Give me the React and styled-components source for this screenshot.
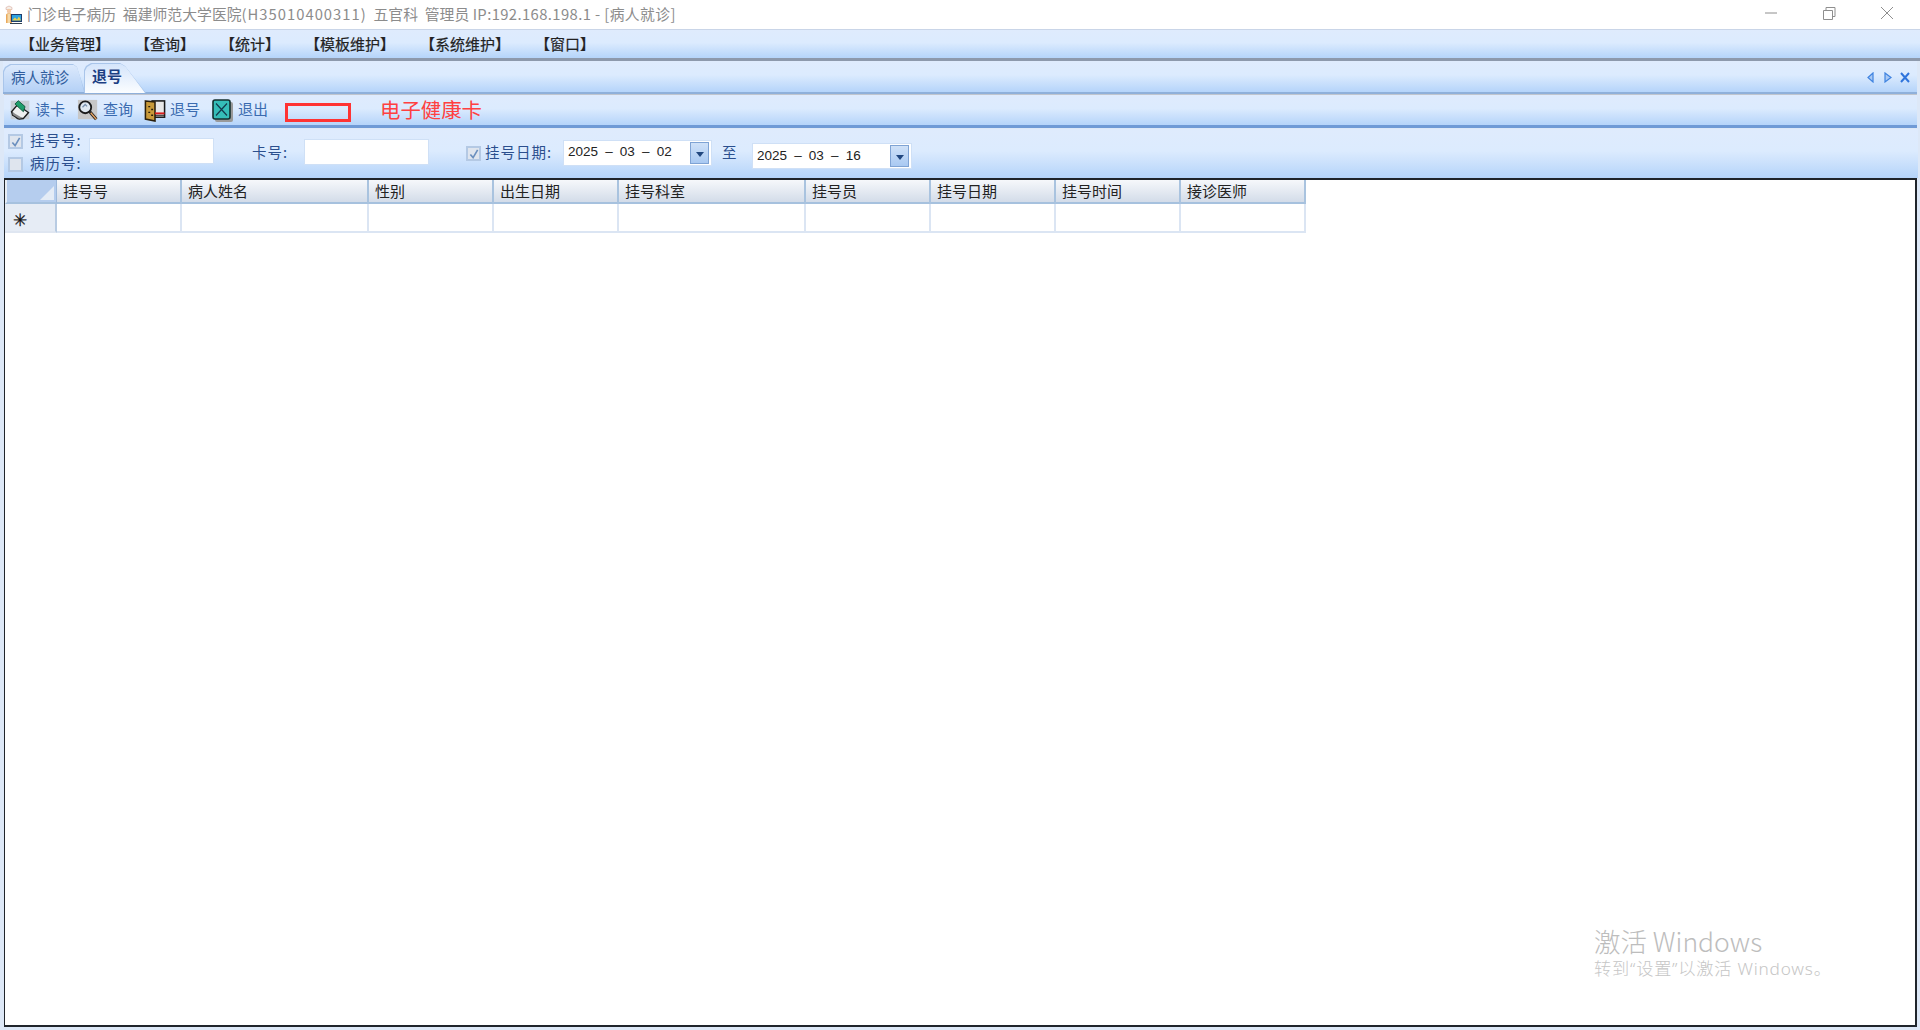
import React from "react";
import styled, { createGlobalStyle } from "styled-components";

const Global = createGlobalStyle`
  html, body { margin: 0; padding: 0; width: 100%; height: 100%; overflow: hidden; background: #fff; }
  #root { width: 1920px; height: 1030px; }
  * { box-sizing: border-box; }
`;

const FONT = `"Noto Sans CJK SC", "Noto Sans", sans-serif`;
const BAND = "linear-gradient(#dfebfd 0%, #dcebfe 45%, #b5d4fa 100%)";

const Win = styled.div`
  width: 1920px; height: 1030px; display: flex; flex-direction: column;
  font-family: ${FONT}; background: #dde8f7; position: relative; overflow: hidden;
`;
const TitleBar = styled.div`
  height: 29px; flex: none; background: #fff; display: flex; align-items: center; padding-left: 3px;
  color: #8c8c8c; font-size: 14.8px; white-space: pre;
`;
const TitleText = styled.span`margin: -2px 0 0 4px; flex: 1; letter-spacing: 0.05px; line-height: 29px;`;
const Wide = styled.span`letter-spacing: ${p => p.$ls}px;`;
const WinBtns = styled.div`display: flex; width: 182px; flex: none; justify-content: space-between; padding: 0 25px; color: #8e8e8e; margin-top: -3px;`;
const MenuBar = styled.div`
  height: 32px; flex: none; display: flex; gap: 25px; padding: 0 0 0 20px; align-items: center;
  background: ${BAND}; border-top: 1px solid #c9d5e8; border-bottom: 3px solid #8d99ac;
`;
const MenuItem = styled.span`font-size: 15px; color: #222; line-height: 20px; -webkit-text-stroke: 0.2px #222;`;

const TabStrip = styled.div`
  height: 33px; flex: none; margin: 0 3px; display: flex; align-items: flex-end; position: relative;
  background: ${BAND}; border-bottom: 2px solid #8fb0da;
`;
const Tab = styled.div`
  position: relative;
  height: ${p => p.$active ? 30 : 28}px;
  width: ${p => p.$active ? 62 : 82}px;
  margin-bottom: ${p => p.$active ? -1 : 0}px;
  margin-left: ${p => p.$active ? -1 : 0}px;
  padding: 2px 0 0 8px;
  font-size: ${p => p.$active ? 15 : 14.5}px;
  font-weight: ${p => p.$active ? 700 : 400};
  color: ${p => p.$active ? "#1c3f83" : "#2f5c9c"};
  line-height: 22px;
  background: #a9c5ea;
  --shape: ${p => p.$active
    ? "polygon(0 100%, 0 7px, 2px 3px, 7px 0, 36px 0, 41px 3px, 100% 100%)"
    : "polygon(0 100%, 0 7px, 2px 3px, 7px 0, 70px 0, 74px 3px, 100% 100%)"};
  clip-path: var(--shape);
  & > span { position: relative; }
  &::before {
    content: ""; position: absolute; inset: 1px 1px 0 1px; clip-path: var(--shape);
    background: ${p => p.$active ? "linear-gradient(#d5e5fb, #fbfdff)" : "linear-gradient(#dce9fc, #b4d1f6)"};
  }
`;
const TabCtrls = styled.div`position: absolute; right: 7px; top: 11px; display: flex; gap: 7px;`;

const ToolBar = styled.div`
  height: 34px; flex: none; margin: 0 3px 0 4px; display: flex; align-items: center; padding-left: 5px;
  background: ${BAND}; border-top: 1px solid #c0c5ce; border-bottom: 3px solid #6f9ad6; position: relative;
`;
const Tool = styled.div`display: flex; align-items: center; width: ${p => p.$w}px; color: #3a6bb0; font-size: 15px; line-height: 20px;`;
const ToolLabel = styled.span`margin-top: -2px;`;
const IconSlot = styled.span`width: 26px; flex: none; display: flex; align-items: center;`;
const RedBox = styled.div`width: 66px; height: 19px; margin: 4px 0 0 5px; border: 3px solid #ff3333; flex: none;`;
const RedText = styled.div`font-size: 20.4px; color: #ff4040; margin-left: 29px; line-height: 26px; margin-top: -3px;`;

const Filter = styled.div`
  height: 49px; flex: none; margin: 1px 2px 0 4px; display: flex; align-items: flex-start;
  background: ${BAND}; position: relative; padding-left: 4px;
`;
const CheckCol = styled.div`display: flex; flex-direction: column; gap: 8px; margin-top: 5px;`;
const CheckRow = styled.label`
  display: flex; align-items: center; gap: ${p => p.$gap ?? 7}px; height: 15px;
  margin-top: ${p => p.$top ?? 0}px; margin-left: ${p => p.$left ?? 0}px;
`;
const CheckText = styled.span`
  width: ${p => p.$w}px; font-size: 14.5px; letter-spacing: 1px; color: #2b4f8e; line-height: 16px; margin-top: -3px; white-space: pre;
`;
const Box = styled.span`
  width: 15px; height: 15px; flex: none; border: 2px solid #b4c9e4; background: #dfe5ee;
  display: inline-flex; align-items: center; justify-content: center;
`;
const Field = styled.div`
  width: ${p => p.$w}px; height: 26px; margin-left: ${p => p.$left}px; margin-top: ${p => p.$top}px;
  background: #fff; border: 1px solid #cfe0f6; flex: none; display: flex; align-items: center; justify-content: space-between;
  padding: 0 2px 0 4px; font-family: "Liberation Sans", sans-serif; font-size: 13.5px; color: #222; word-spacing: 3.4px;
`;
const DateText = styled.span`margin-top: ${p => p.$up ? -3 : -1}px;`;
const Label = styled.span`
  width: ${p => p.$w}px; flex: none; font-size: 14.5px; letter-spacing: 1px; color: #2b4f8e;
  margin-left: ${p => p.$left}px; margin-top: ${p => p.$top}px; line-height: 20px; white-space: pre;
`;
const Arrow = styled.span`
  width: 19px; height: 22px; flex: none; background: linear-gradient(#cfe1f8, #a9c9f2); border: 1px solid #7fa3d4;
  display: inline-flex; align-items: center; justify-content: center; padding-top: 3px;
`;

const GridArea = styled.div`
  flex: 1; margin: 0 3px 3px 4px; background: #fff; border: 2px solid #20252b; border-left-width: 1px; position: relative; overflow: hidden;
`;
const Table = styled.div`
  width: 1301px; display: grid;
  grid-template-columns: 52px 125px 187px 125px 125px 187px 125px 125px 125px 125px;
  grid-template-rows: 24px 29px;
`;
const Corner = styled.div`
  background: #b5cdee; border-left: 2px solid #e8eef6; border-right: 1px solid #9db9db; border-bottom: 2px solid #a6c1de; position: relative;
  &::after { content: ""; position: absolute; right: 2px; bottom: 2px; border-left: 14px solid transparent; border-bottom: 14px solid #e4ecf6; }
`;
const Head = styled.div`
  background: linear-gradient(#f6f8fb, #d3dce9); border-right: 2px solid #a9c3df; border-bottom: 2px solid #a6c1de;
  font-size: 15px; color: #222; padding-left: 6px; line-height: 22px;
`;
const RowHead = styled.div`
  background: #e6ecf5; border-right: 2px solid #b8cbe2; border-bottom: 2px solid #dfe6f1;
  font-size: 17px; color: #111; padding: 3px 0 0 8px; line-height: 24px; -webkit-text-stroke: 0.3px #111;
`;
const Cell = styled.div`background: #fff; border-right: 2px solid #dbe5f3; border-bottom: 2px solid #dbe5f3;`;

const Watermark = styled.div`position: absolute; left: 1594px; top: 923px; color: #bdbdbd; pointer-events: none;`;
const WmTop = styled.div`font-size: 26.5px; line-height: 36px; font-weight: 300;`;
const WmSub = styled.div`
  font-family: "Noto Sans", "Noto Sans CJK SC", sans-serif; font-size: 17.2px; letter-spacing: 0.8px; line-height: 24px; color: #c6c6c6; margin-top: -2px; font-weight: 300;
`;

const Logo = () => (
  <svg width="20" height="20" viewBox="0 0 20 20">
    <path d="M3 2.500l3-1.500 3 1.500v2H3z" fill="#f4f0ea" stroke="#d9a79a" strokeWidth="0.6" />
    <circle cx="6" cy="6" r="2.200" fill="#f3c9a6" />
    <path d="M3 10c0-1 1-2 3-2s3 1 3 2v8H3z" fill="#e9a95c" />
    <path d="M4.500 8.500h2.500v9.500H4.500z" fill="#f5d9a8" />
    <rect x="8" y="9" width="11" height="8" fill="#1c3d6e" />
    <rect x="9" y="10" width="9" height="5.500" fill="#2fa3e0" />
    <path d="M9 15.500l3-3 2 2 2-3 2 4z" fill="#e8d14d" />
    <path d="M7 18h12v1H7z" fill="#33424f" />
  </svg>
);
const ReaderIcon = () => (
  <svg width="22" height="24" viewBox="0 0 26 24">
    <rect x="2" y="1" width="22" height="22" fill="#c7cdd4" />
    <path d="M3 14l7-8 13 9-6 7H10z" fill="#efefef" stroke="#1c1c1c" strokeWidth="1.6" />
    <path d="M3 14l1 4 8 5 5-1" fill="#8b8b8b" stroke="#1c1c1c" strokeWidth="1.2" />
    <path d="M7 5l4-4 8 7-2 6z" fill="#1f9e6b" stroke="#0e4f35" strokeWidth="1" />
  </svg>
);
const GlassIcon = () => (
  <svg width="22" height="22" viewBox="0 0 24 24">
    <rect x="1" y="1" width="21" height="21" fill="#c7c7c7" />
    <circle cx="9" cy="9" r="6.500" fill="#dfe8f0" stroke="#1a1a1a" strokeWidth="2" />
    <path d="M6 9l3-3 2 2" stroke="#7a92ae" strokeWidth="1.4" fill="none" />
    <path d="M14 14l7 8" stroke="#1a1a1a" strokeWidth="3.4" />
    <path d="M15 15l6 7" stroke="#e0a060" strokeWidth="1.6" />
  </svg>
);
const DoorIcon = () => (
  <svg width="22" height="23" viewBox="0 0 22 24">
    <rect x="8" y="2" width="13" height="17" fill="#e8e8e8" stroke="#1a1a1a" strokeWidth="1.6" />
    <path d="M1 2l10 1v20l-10-2z" fill="#c99a3a" stroke="#2a1f0c" strokeWidth="1.6" />
    <path d="M4 8h2M7 11h2M4 14h2M7 17h2" stroke="#2a1f0c" strokeWidth="1.4" />
    <path d="M11 15h10" stroke="#d91c1c" strokeWidth="2" />
    <path d="M11 17h10" stroke="#1a1a1a" strokeWidth="1" />
  </svg>
);
const ExitIcon = () => (
  <svg width="21" height="23" viewBox="0 0 21 23">
    <rect x="3" y="3" width="18" height="20" rx="2" fill="#9a9a9a" />
    <rect x="1" y="1" width="17" height="19" rx="2" fill="#35bdb8" stroke="#14302f" strokeWidth="1.6" />
    <path d="M4 4.500l11 12M15 4.500l-11 12" stroke="#133a4c" strokeWidth="1.2" />
  </svg>
);
const Tick = () => (
  <svg width="10" height="10" viewBox="0 0 11 11"><path d="M1.500 6l3 3.500 5-8.500" fill="none" stroke="#6b8fbe" strokeWidth="1.8" /></svg>
);
const Down = () => <svg width="8" height="5" viewBox="0 0 8 5"><path d="M0 0h8L4 5z" fill="#21477f" /></svg>;
const ChromeIcon = ({ d }) => (
  <svg width="16" height="16" viewBox="0 0 16 16"><path d={d} fill="none" stroke="currentColor" strokeWidth="1" /></svg>
);

const heads = ["挂号号", "病人姓名", "性别", "出生日期", "挂号科室", "挂号员", "挂号日期", "挂号时间", "接诊医师"];

export default function App() {
  return (
    <Win>
      <Global />
      <TitleBar>
        <Logo />
        <TitleText>
          {"门诊电子病历  福建师范大学医院"}<Wide $ls={1}>(H35010400311)</Wide>{"  五官科  管理员 "}<Wide $ls={0.4}>{"IP:192.168.198.1 - [病人就诊]"}</Wide>
        </TitleText>
        <WinBtns>
          <ChromeIcon d="M2 8h12" />
          <ChromeIcon d="M2.500 5.500h9v9h-9zM5 5.500V2.500h9v9h-2.500" />
          <ChromeIcon d="M2 2l12 12M14 2L2 14" />
        </WinBtns>
      </TitleBar>
      <MenuBar>
        {["【业务管理】", "【查询】", "【统计】", "【模板维护】", "【系统维护】", "【窗口】"].map(m => <MenuItem key={m}>{m}</MenuItem>)}
      </MenuBar>
      <TabStrip>
        <Tab><span>病人就诊</span></Tab>
        <Tab $active><span>退号</span></Tab>
        <TabCtrls>
          <svg width="10" height="11" viewBox="0 0 10 11"><path d="M7 1L2 5.500 7 10z" fill="#a9c9f4" stroke="#3f83e0" strokeWidth="1.2" /></svg>
          <svg width="10" height="11" viewBox="0 0 10 11"><path d="M2 1l6 4.500L2 10z" fill="#a9c9f4" stroke="#3f83e0" strokeWidth="1.2" /></svg>
          <svg width="10" height="11" viewBox="0 0 10 11"><path d="M1 1l8 9M9 1L1 10" stroke="#2f74dc" strokeWidth="2" /></svg>
        </TabCtrls>
      </TabStrip>
      <ToolBar>
        <Tool $w={68}><IconSlot><ReaderIcon /></IconSlot><ToolLabel>读卡</ToolLabel></Tool>
        <Tool $w={67}><IconSlot><GlassIcon /></IconSlot><ToolLabel>查询</ToolLabel></Tool>
        <Tool $w={68}><IconSlot><DoorIcon /></IconSlot><ToolLabel>退号</ToolLabel></Tool>
        <Tool $w={68}><IconSlot><ExitIcon /></IconSlot><ToolLabel>退出</ToolLabel></Tool>
        <RedBox />
        <RedText>电子健康卡</RedText>
      </ToolBar>
      <Filter>
        <CheckCol>
          <CheckRow><Box><Tick /></Box><CheckText $w={52}>挂号号:</CheckText></CheckRow>
          <CheckRow><Box /><CheckText $w={52}>病历号:</CheckText></CheckRow>
        </CheckCol>
        <Field $w={125} $left={7} $top={9} />
        <Label $w={36} $left={38} $top={13}>卡号:</Label>
        <Field $w={125} $left={16} $top={10} />
        <CheckRow $left={37} $top={17} $gap={4}><Box><Tick /></Box><CheckText $w={67}>挂号日期:</CheckText></CheckRow>
        <Field $w={149} $left={11} $top={11}>
          <DateText $up>2025 – 03 – 02</DateText><Arrow><Down /></Arrow>
        </Field>
        <Label $w={15} $left={10} $top={13}>至</Label>
        <Field $w={160} $left={15} $top={14}>
          <DateText>2025 – 03 – 16</DateText><Arrow><Down /></Arrow>
        </Field>
      </Filter>
      <GridArea>
        <Table>
          <Corner />
          {heads.map(h => <Head key={h}>{h}</Head>)}
          <RowHead>✳</RowHead>
          {heads.map(h => <Cell key={h} />)}
        </Table>
      </GridArea>
      <Watermark>
        <WmTop>激活 Windows</WmTop>
        <WmSub>转到“设置”以激活 Windows。</WmSub>
      </Watermark>
    </Win>
  );
}
